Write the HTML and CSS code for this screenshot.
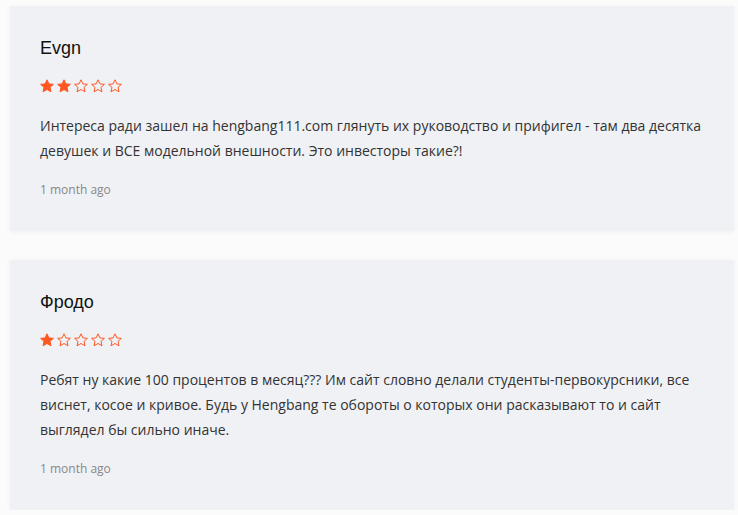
FILE: index.html
```html
<!DOCTYPE html>
<html lang="ru">
<head>
    <meta charset="UTF-8">
    <meta name="viewport" content="width=device-width, initial-scale=1.0">
    <title>Отзывы</title>
    <link rel="stylesheet" href="styles.css">
</head>
<body>
    <svg width="0" height="0" class="defs">
        <defs>
            <path id="star" d="M7 .8l1.9 4.1 4.5.45-3.4 3 1 4.45L7 10.5l-4 2.3 1-4.45-3.4-3 4.5-.45z"/>
        </defs>
    </svg>

    <div class="reviews">
        <div class="review">
            <div class="review-name">Evgn</div>
            <div class="stars">
                <svg class="star full" viewBox="0 0 14 14"><use href="#star"/></svg>
                <svg class="star full" viewBox="0 0 14 14"><use href="#star"/></svg>
                <svg class="star" viewBox="0 0 14 14"><use href="#star"/></svg>
                <svg class="star" viewBox="0 0 14 14"><use href="#star"/></svg>
                <svg class="star" viewBox="0 0 14 14"><use href="#star"/></svg>
            </div>
            <p class="review-text">Интереса ради зашел на hengbang111.com глянуть их руководство и прифигел - там два десятка девушек и ВСЕ модельной внешности. Это инвесторы такие?!</p>
            <div class="review-date">1 month ago</div>
        </div>

        <div class="review">
            <div class="review-name">Фродо</div>
            <div class="stars">
                <svg class="star full" viewBox="0 0 14 14"><use href="#star"/></svg>
                <svg class="star" viewBox="0 0 14 14"><use href="#star"/></svg>
                <svg class="star" viewBox="0 0 14 14"><use href="#star"/></svg>
                <svg class="star" viewBox="0 0 14 14"><use href="#star"/></svg>
                <svg class="star" viewBox="0 0 14 14"><use href="#star"/></svg>
            </div>
            <p class="review-text">Ребят ну какие 100 процентов в месяц??? Им сайт словно делали студенты-первокурсники, все виснет, косое и кривое. Будь у Hengbang те обороты о которых они расказывают то и сайт выглядел бы сильно иначе.</p>
            <div class="review-date">1 month ago</div>
        </div>
    </div>
</body>
</html>
```
FILE: styles.css
```css
* {
    margin: 0;
    padding: 0;
    box-sizing: border-box;
}

body {
    background: #fbfbfb;
    font-family: 'Open Sans', sans-serif;
    color: #333;
}

.defs {
    position: absolute;
}

.reviews {
    display: flex;
    flex-direction: column;
    gap: 29px;
    padding: 6px 4px 0 10px;
}

.review {
    background: #f0f1f5;
    padding: 30px 30px 32px;
    box-shadow: 0 1px 5px rgba(0, 0, 0, 0.05);
}

.review-name {
    font-family: 'Liberation Sans', Arial, sans-serif;
    font-size: 18px;
    line-height: 24px;
    color: #111;
}

.stars {
    display: flex;
    gap: 3px;
    margin-top: 19px;
    height: 14px;
}

.star {
    width: 14px;
    height: 14px;
    fill: none;
    stroke: #ff5722;
    stroke-width: 1;
    stroke-linejoin: round;
}

.star.full {
    fill: #ff5722;
}

.review-text {
    margin-top: 20px;
    font-size: 14px;
    line-height: 25px;
    color: #333;
}

.review-date {
    margin-top: 18px;
    font-size: 12px;
    line-height: 18px;
    color: #888;
}
```
